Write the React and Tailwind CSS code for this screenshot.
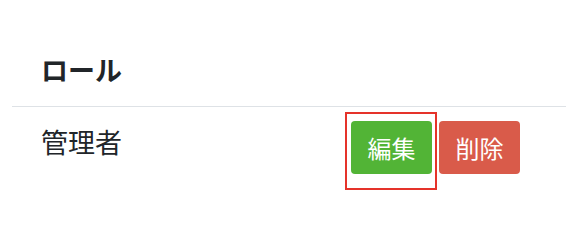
import React from "react";

const roles = [{ id: 1, name: "管理者" }];

const App = () => {
  return (
    <div
      className="w-[566px] h-[250px] bg-white text-[#212529]"
      style={{ fontFamily: '"Noto Sans CJK JP", "Noto Sans", sans-serif' }}
    >
      <div className="pl-[12px] pt-[50px]">
        <div className="pt-[6px] pb-[23px] pl-[29px] border-b border-[#dee2e6]">
          <div className="text-[27px] font-bold leading-none">ロール</div>
        </div>
        {roles.map((role) => (
          <div key={role.id} className="flex items-start pl-[29px]">
            <span className="mt-[13px] text-[27px] leading-[44px] flex-1">{role.name}</span>
            <div className="mt-[5px] flex items-start pr-[46px]">
              <div className="border-2 border-[#e5332a] pt-[7px] pb-[14px] pl-[4px] pr-[3px]">
                <button className="w-[81px] h-[53px] rounded-[4px] bg-[#52b436] text-white text-[24px] leading-none">
                  編集
                </button>
              </div>
              <button className="mt-[9px] ml-[2px] w-[81px] h-[53px] rounded-[4px] bg-[#d95b4a] text-white text-[24px] leading-none">
                削除
              </button>
            </div>
          </div>
        ))}
      </div>
    </div>
  );
};

export default App;
